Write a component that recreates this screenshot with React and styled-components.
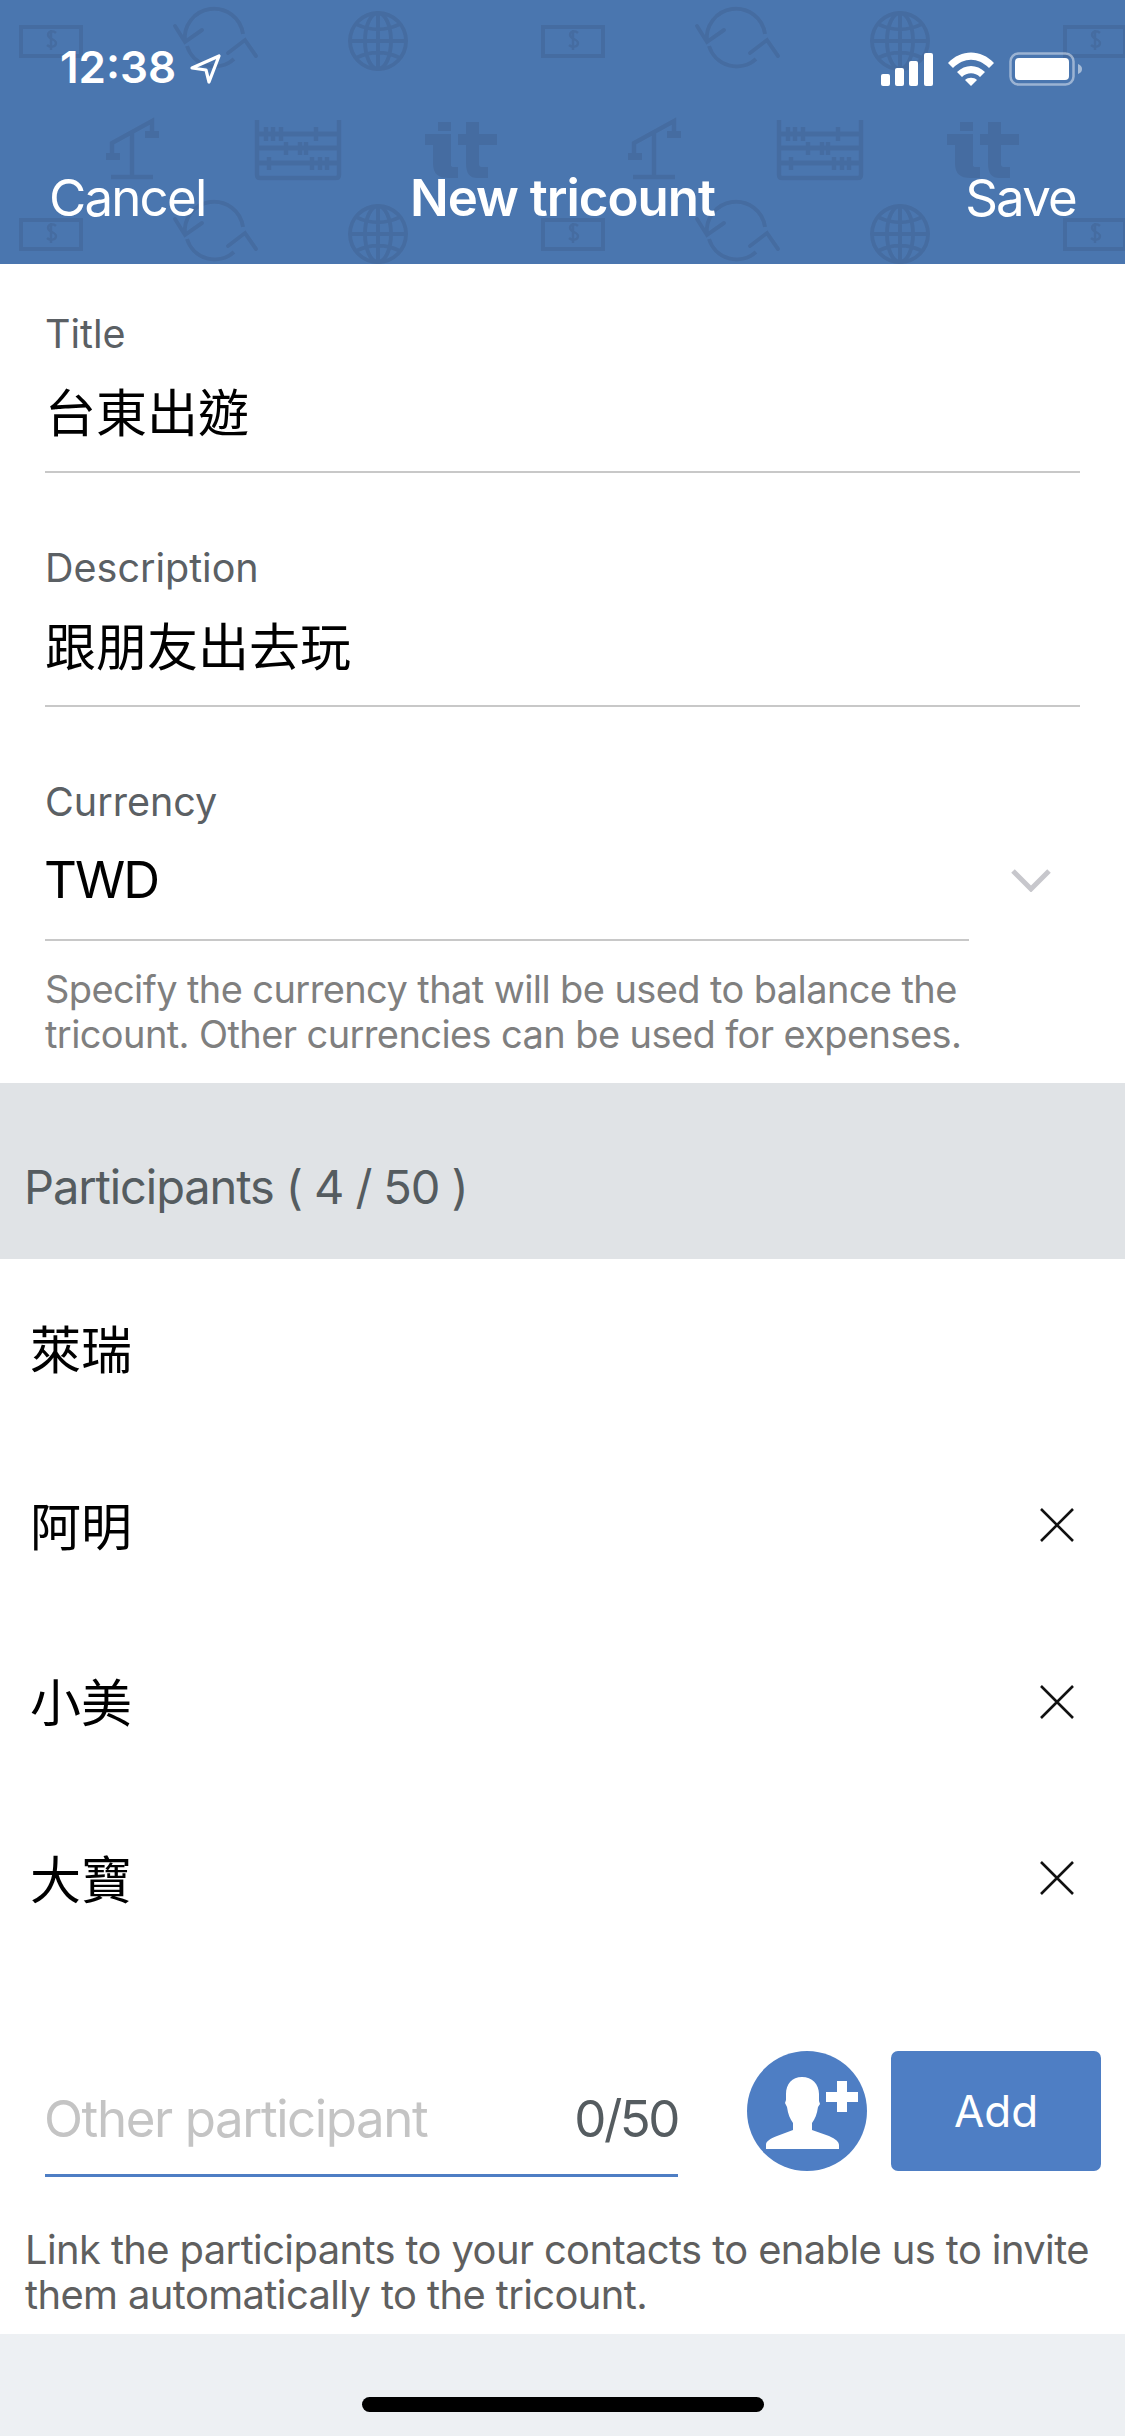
import styled, { createGlobalStyle } from "styled-components";

const CJK = `Inter, "Noto Sans CJK TC", sans-serif`;

const GlobalStyle = createGlobalStyle`
  html, body {
    margin: 0;
    padding: 0;
    background: #fff;
  }
  * {
    box-sizing: border-box;
  }
`;

const Screen = styled.div`
  width: 1125px;
  height: 2436px;
  display: flex;
  flex-direction: column;
  overflow: hidden;
  background: #fff;
  font-family: ${CJK};
`;

const Header = styled.header`
  position: relative;
  height: 264px;
  flex: none;
  background: #4a76af;
  color: #fff;
`;

const PatternLayer = styled.svg`
  position: absolute;
  inset: 0;
  width: 100%;
  height: 100%;
`;

const StatusBar = styled.div`
  position: relative;
  height: 166px;
  padding: 42px 42px 0 60px;
  display: flex;
  justify-content: space-between;
  align-items: flex-start;
`;

const Clock = styled.div`
  display: flex;
  align-items: flex-start;
  gap: 14px;
  font-size: 44px;
  line-height: 50px;
  font-weight: 600;
`;

const StatusIcons = styled.div`
  display: flex;
  align-items: center;
  gap: 15px;
  padding-top: 10px;
`;

const NavBar = styled.nav`
  position: relative;
  display: flex;
  justify-content: space-between;
  align-items: center;
  height: 63px;
  padding: 0 49px;
  font-size: 51px;
  line-height: 63px;
  letter-spacing: -1.8px;
`;

const NavTitle = styled.span`
  position: absolute;
  left: 0;
  right: 0;
  text-align: center;
  font-weight: 600;
  letter-spacing: -1px;
`;

const Form = styled.section`
  flex: none;
  height: 819px;
  padding-top: 44px;
`;

const Field = styled.div`
  position: relative;
  margin: 0 45px 69px;
  width: ${(p) => p.$width || 1035}px;
  height: 165px;
  border-bottom: 2px solid #c8c8c8;
`;

const FieldLabel = styled.div`
  height: 52px;
  font-size: 39.5px;
  line-height: 52px;
  color: #5b6064;
`;

const FieldValue = styled.div`
  margin-top: ${(p) => (p.$tight ? 17 : 19)}px;
  margin-left: ${(p) => (p.$tight ? -1 : 0)}px;
  font-size: 51px;
  line-height: 70px;
  color: #000;
  letter-spacing: ${(p) => (p.$tight ? "-1.9px" : "0")};
`;

const Chevron = styled.svg`
  position: absolute;
  left: 966px;
  top: 92px;
`;

const Hint = styled.p`
  margin: ${(p) => p.$margin || 0};
  font-size: ${(p) => p.$size || 38}px;
  line-height: 45px;
  color: ${(p) => p.$color || "#7f7f7f"};
  letter-spacing: -0.6px;
  white-space: nowrap;
`;

const SectionBar = styled.div`
  flex: none;
  height: 176px;
  padding: 31px 0 0 24px;
  display: flex;
  align-items: center;
  background: #e0e3e6;
  color: #555c60;
  font-size: 47px;
  letter-spacing: -1.1px;
`;

const List = styled.div`
  flex: none;
`;

const Row = styled.div`
  height: 176.5px;
  padding: 0 50px 0 30px;
  display: flex;
  justify-content: space-between;
  align-items: center;
  font-size: 51px;
  color: #000;
`;

const RemoveButton = styled.svg`
  display: block;
  margin-top: 3px;
`;

const AddArea = styled.div`
  flex: none;
  margin-top: 86px;
  padding: 0 24px 0 45px;
  display: flex;
  align-items: flex-start;
`;

const InputBox = styled.div`
  width: 633px;
  height: 126px;
  padding-top: 12px;
  display: flex;
  justify-content: space-between;
  align-items: center;
  border-bottom: 3px solid #4e7ec4;
  font-size: 51px;
  letter-spacing: -1.4px;
`;

const Placeholder = styled.span`
  margin-left: -1px;
  color: #c4c4c4;
`;

const Counter = styled.span`
  color: #555c60;
  letter-spacing: -2.5px;
`;

const ContactButton = styled.div`
  margin-left: 69px;
  width: 120px;
  height: 120px;
  flex: none;
  border-radius: 50%;
  background: #4e7ec4;
`;

const AddButton = styled.div`
  margin-left: 24px;
  width: 210px;
  height: 120px;
  flex: none;
  display: flex;
  align-items: center;
  justify-content: center;
  border-radius: 7px;
  background: #4e7ec4;
  color: #fff;
  font-size: 44px;
`;

const Footer = styled.footer`
  flex: 1;
  position: relative;
  background: #edf0f3;
`;

const HomeBar = styled.div`
  position: absolute;
  left: 362px;
  top: 63px;
  width: 402px;
  height: 15px;
  border-radius: 8px;
  background: #000;
`;

const HeaderPattern = () => (
  <PatternLayer aria-hidden="true">
    <defs>
      <pattern id="doodles" width="522" height="193" patternUnits="userSpaceOnUse">
        <g fill="none" stroke="#456ca1" strokeWidth="4">
          {/* banknote */}
          <rect x="21" y="27" width="60" height="29" />
          <path strokeWidth="2.5" d="M56 33c-3-3-8-2-8 2s8 4 8 8-6 5-9 2M51 30v20" />
          {/* exchange arrows */}
          <path d="M185 42a29 29 0 0 1 58-8M234 59a29 29 0 0 1-47-13" />
          <path strokeLinecap="round" d="M175 26l10 16 17-12M228 53l17-13 11 16" />
          {/* globe */}
          <circle cx="378" cy="41" r="28" />
          <ellipse cx="378" cy="41" rx="13" ry="28" />
          <path d="M378 13v56M350 41h56M356 24c14 7 30 7 44 0M356 58c14-7 30-7 44 0" />
          {/* scale */}
          <path strokeWidth="4.5" d="M112 154v-11l40-22v14M132 132v45M111 177h42" />
          {/* abacus */}
          <path strokeWidth="4.5" d="M257 120v55q0 3 3 3h76q3 0 3-3v-55" />
          <path strokeWidth="5" d="M258 134h80M258 148h80M258 163h80" />
          <path
            strokeWidth="4.5"
            d="M266 127v14M273 127v14M281 127v14M316 127v14M286 142v13M300 142v13M306 142v13M269 157v13M312 157v13M320 157v13M327 157v13"
          />
        </g>
        <g fill="#456ca1">
          {/* scale pans */}
          <rect x="106" y="153" width="14" height="7" />
          <rect x="145" y="131" width="14" height="7" />
          {/* tricount logo */}
          <rect x="438" y="122" width="13" height="9" />
          <path d="M425 134h26v31q0 2 3 2h4v11h-10q-15 0-15-14v-19h-8z" />
          <path d="M466 122h13v12h18v11h-18v19q0 3 3 3h6v11h-11q-11 0-11-14z" />
          <rect x="458" y="134" width="8" height="11" />
        </g>
      </pattern>
    </defs>
    <rect width="100%" height="100%" fill="url(#doodles)" />
  </PatternLayer>
);

const LocationArrow = () => (
  <svg width="31" height="32" viewBox="0 0 31 32" style={{ marginTop: 11 }}>
    <path
      d="M2 15 29 3 19 29l-3-12z"
      fill="none"
      stroke="#fff"
      strokeWidth="3.2"
      strokeLinejoin="round"
    />
  </svg>
);

const SignalIcon = () => (
  <svg width="52" height="33" viewBox="0 0 52 33" fill="#fff">
    <rect x="0" y="21" width="9" height="12" rx="2" />
    <rect x="14" y="15" width="9" height="18" rx="2" />
    <rect x="28" y="8" width="9" height="25" rx="2" />
    <rect x="43" y="0" width="9" height="33" rx="2" />
  </svg>
);

const WifiIcon = () => (
  <svg width="46" height="34" viewBox="0 0 46 34" fill="#fff">
    <path d="M0 11C13-3 33-3 46 11l-5 5C30 5 16 5 5 16z" />
    <path d="M9 20c8-8 20-8 28 0l-5 5c-5-5-13-5-18 0z" />
    <path d="M17 28c3-3 9-3 12 0l-6 6z" />
  </svg>
);

const BatteryIcon = () => (
  <svg width="74" height="34" viewBox="0 0 74 34">
    <rect x="1.5" y="1.5" width="63" height="31" rx="8" fill="none" stroke="#fff" strokeOpacity="0.45" strokeWidth="2.5" />
    <rect x="6" y="6" width="54" height="22" rx="4" fill="#fff" />
    <path d="M69 12c3 1 4 3 4 5s-1 4-4 5z" fill="#fff" fillOpacity="0.5" />
  </svg>
);

const CloseIcon = () => (
  <RemoveButton width="36" height="36" viewBox="0 0 36 36">
    <path d="M2 2l32 32M34 2 2 34" stroke="#111" strokeWidth="2.6" />
  </RemoveButton>
);

const AddContactIcon = () => (
  <svg width="120" height="120" viewBox="0 0 120 120" fill="#fff">
    <path d="M55 26c10 0 17 7 17 17v7l1 3-2 3c-1 7-3 12-6 16v7l17 6c7 3 10 6 10 9v4H19v-4c0-4 4-6 11-9l16-6v-7c-3-4-5-9-6-16l-2-4 1-3v-6c0-10 6-17 16-17z" />
    <path d="M90 30h10v11h11v10h-11v10H90V51H79V41h11z" />
  </svg>
);

const participants = [
  { name: "萊瑞", removable: false },
  { name: "阿明", removable: true },
  { name: "小美", removable: true },
  { name: "大寶", removable: true },
];

const App = () => {
  return (
    <Screen>
      <GlobalStyle />
      <Header>
        <HeaderPattern />
        <StatusBar>
          <Clock>
            12:38
            <LocationArrow />
          </Clock>
          <StatusIcons>
            <SignalIcon />
            <WifiIcon />
            <BatteryIcon />
          </StatusIcons>
        </StatusBar>
        <NavBar>
          <span>Cancel</span>
          <NavTitle>New tricount</NavTitle>
          <span>Save</span>
        </NavBar>
      </Header>

      <Form>
        <Field>
          <FieldLabel>Title</FieldLabel>
          <FieldValue>台東出遊</FieldValue>
        </Field>
        <Field>
          <FieldLabel>Description</FieldLabel>
          <FieldValue>跟朋友出去玩</FieldValue>
        </Field>
        <Field $width={924}>
          <FieldLabel>Currency</FieldLabel>
          <FieldValue $tight>TWD</FieldValue>
          <Chevron width="40" height="24" viewBox="0 0 40 24">
            <path d="M2 3l18 18L38 3" fill="none" stroke="#c7c7cc" strokeWidth="5" />
          </Chevron>
        </Field>
        <Hint $margin="-43px 45px 0">
          Specify the currency that will be used to balance the
          <br />
          tricount. Other currencies can be used for expenses.
        </Hint>
      </Form>

      <SectionBar>Participants ( 4 / 50 )</SectionBar>

      <List>
        {participants.map((person) => (
          <Row key={person.name}>
            {person.name}
            {person.removable && <CloseIcon />}
          </Row>
        ))}
      </List>

      <AddArea>
        <InputBox>
          <Placeholder>Other participant</Placeholder>
          <Counter>0/50</Counter>
        </InputBox>
        <ContactButton>
          <AddContactIcon />
        </ContactButton>
        <AddButton>Add</AddButton>
      </AddArea>

      <Hint $margin="50px 25px 17px" $color="#5f5f5f" $size={39.9}>
        Link the participants to your contacts to enable us to invite
        <br />
        them automatically to the tricount.
      </Hint>

      <Footer>
        <HomeBar />
      </Footer>
    </Screen>
  );
};

export default App;
